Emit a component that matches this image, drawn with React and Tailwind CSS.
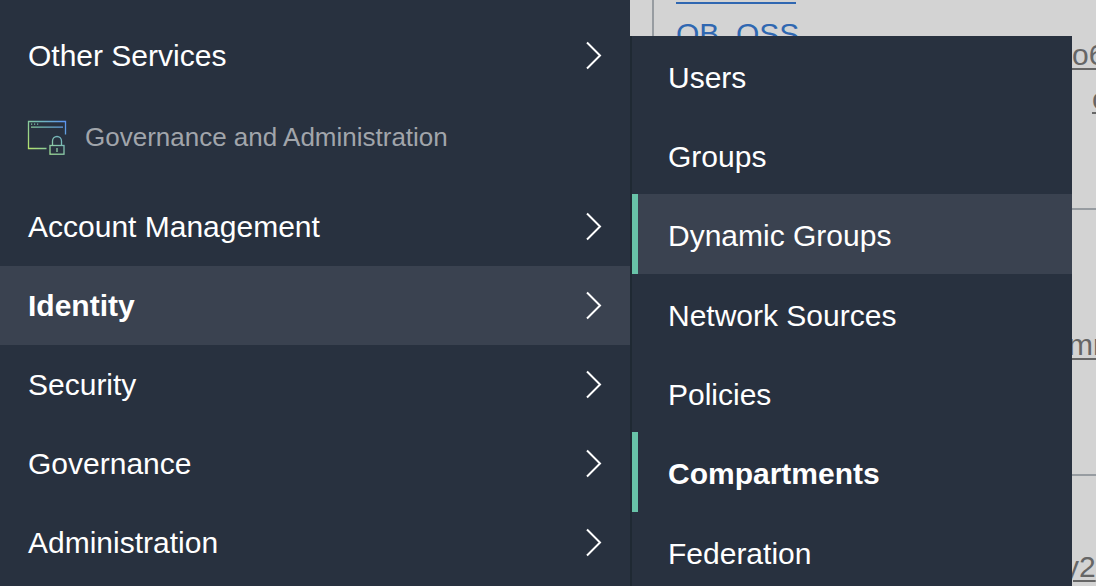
const SERVICES = [
  { label: 'Account Management' },
  { label: 'Identity', active: true },
  { label: 'Security' },
  { label: 'Governance' },
  { label: 'Administration' },
];

const IDENTITY_PAGES = [
  { label: 'Users' },
  { label: 'Groups' },
  { label: 'Dynamic Groups', hovered: true },
  { label: 'Network Sources' },
  { label: 'Policies' },
  { label: 'Compartments', current: true },
  { label: 'Federation' },
];

function Chevron() {
  return (
    <svg className="h-8 w-5 shrink-0" viewBox="0 0 20 32" fill="none" stroke="currentColor" strokeWidth="2" aria-hidden="true">
      <path d="M5 2.5 18 15.5 5 28.5" />
    </svg>
  );
}

function GovernanceIcon() {
  return (
    <svg className="h-9 w-10 shrink-0" viewBox="0 0 40 36" fill="none" stroke="url(#governance)" strokeWidth="1.3" aria-hidden="true">
      <defs>
        <linearGradient id="governance" gradientUnits="userSpaceOnUse" x1="2" y1="30" x2="37" y2="3">
          <stop offset="0" stopColor="#b4e36c" />
          <stop offset="0.5" stopColor="#76bfb0" />
          <stop offset="1" stopColor="#5b95f0" />
        </linearGradient>
        <linearGradient id="padlock" gradientUnits="userSpaceOnUse" x1="23" y1="35" x2="38" y2="17">
          <stop offset="0" stopColor="#9fdc94" />
          <stop offset="1" stopColor="#68a9c6" />
        </linearGradient>
      </defs>
      <path d="M19.5 29.5H1.5V2.5h37V15.5" />
      <path d="M4 8.2h32M4 5.2h1.2M7 5.2h1.2M10 5.2h1.2" />
      <g stroke="url(#padlock)">
        <rect x="23" y="26.5" width="14" height="8.7" />
        <path d="M25.5 26.5V22a4.5 4.5 0 0 1 9 0v4.5M30 29v4" />
      </g>
    </svg>
  );
}

function ServiceLink({ label, active }) {
  return (
    <a
      href="#"
      className={`flex h-[79px] items-center justify-between pl-7 pr-7 ${active ? 'bg-[#3a4250] font-bold' : ''}`}
    >
      <span>{label}</span>
      <Chevron />
    </a>
  );
}

function PageLink({ label, hovered, current }) {
  const marked = hovered || current;
  return (
    <a
      href="#"
      className={`flex items-center border-l-6 pl-[30px] pt-1 ${marked ? 'h-20 border-[#68c3a8]' : 'h-[79px] border-transparent'} ${hovered ? 'bg-[#3a4250]' : ''} ${current ? 'font-bold' : ''}`}
    >
      {label}
    </a>
  );
}

export default function App() {
  return (
    <div className="flex h-screen overflow-hidden bg-[#d3d3d3] font-['Liberation_Sans',Arial,sans-serif] text-[30px] leading-9">
      <nav aria-label="Services" className="w-[630px] shrink-0 bg-[#28313f] pt-4 text-white">
        <ServiceLink label="Other Services" />
        <h2 className="flex h-[92px] items-center gap-[18px] pl-[27px] pt-1 pb-3 text-[26px] text-[#a1a5ab]">
          <GovernanceIcon />
          Governance and Administration
        </h2>
        {SERVICES.map((item) => (
          <ServiceLink key={item.label} {...item} />
        ))}
      </nav>

      <div className="relative min-w-0 flex-1">
        <main className="ml-[22px] flex h-full border-l-2 border-[#979ca1]">
          <div className="w-[410px] shrink-0 pl-[22px] text-[#2f67b1]">
            <a href="#" className="block h-1 w-[120px] border-b-2 border-[#2f67b1]" aria-label="Compartment" />
            <a href="#" className="mt-3 block w-fit underline">OB_OSS</a>
          </div>
          <div className="flex-1 text-[#666666]">
            <div className="h-[210px] border-b-2 border-[#979ca1] pt-[37px]">
              <a href="#" className="ml-2 block w-fit underline decoration-2 underline-offset-3">o6</a>
              <a href="#" className="ml-7 mt-2 block w-fit underline decoration-2 underline-offset-3">c</a>
            </div>
            <div className="h-[266px] border-b-2 border-[#979ca1] pt-[117px]">
              <a href="#" className="ml-1 block w-fit underline decoration-2 underline-offset-3">mr</a>
            </div>
            <div className="pt-[73px]">
              <a href="#" className="block w-fit underline decoration-2 underline-offset-3">y2</a>
            </div>
          </div>
        </main>

        <nav aria-label="Identity" className="absolute top-9 bottom-0 left-0 w-[442px] overflow-hidden border-l-2 border-[#1f2933] bg-[#28313f] text-white">
          {IDENTITY_PAGES.map((item) => (
            <PageLink key={item.label} {...item} />
          ))}
        </nav>
      </div>
    </div>
  );
}
